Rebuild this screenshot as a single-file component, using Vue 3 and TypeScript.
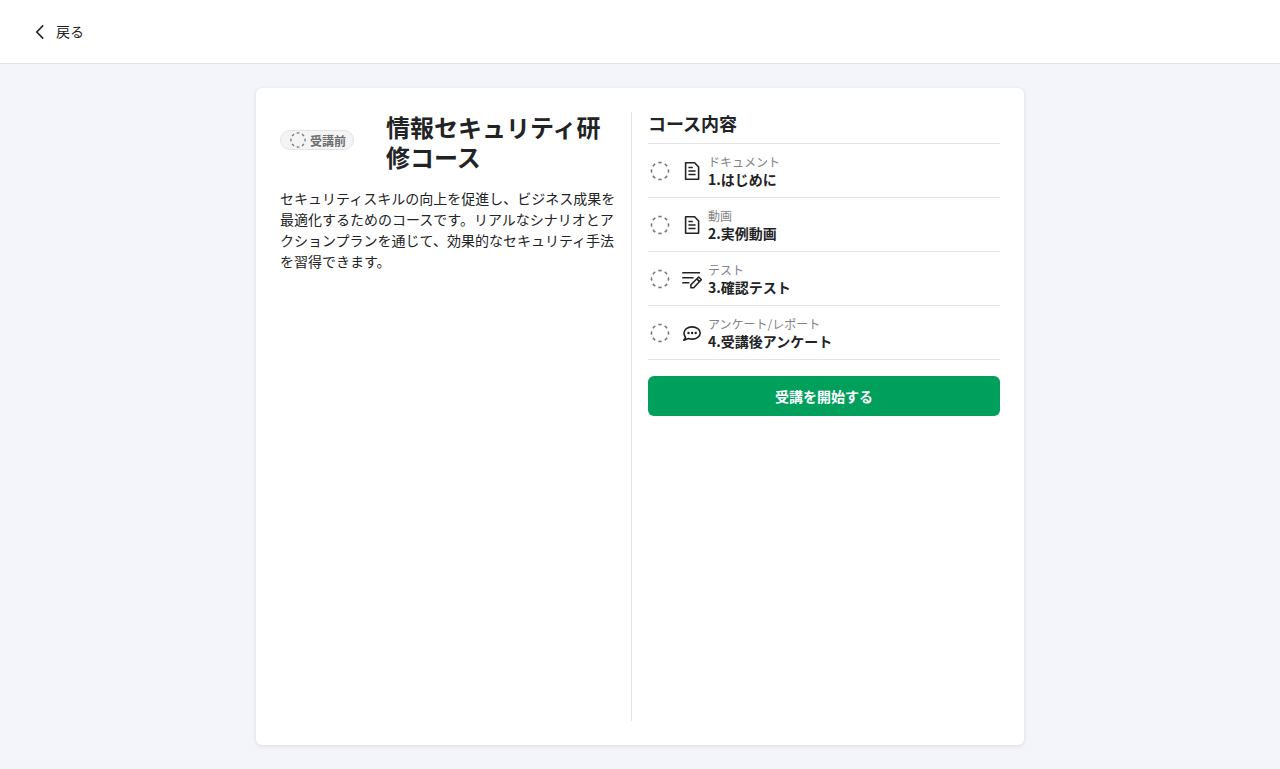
<script setup lang="ts">
type IconName = 'document' | 'test' | 'survey'

interface Lesson {
  kind: string
  title: string
  icon: IconName
}

const lessons: Lesson[] = [
  { kind: 'ドキュメント', title: '1.はじめに', icon: 'document' },
  { kind: '動画', title: '2.実例動画', icon: 'document' },
  { kind: 'テスト', title: '3.確認テスト', icon: 'test' },
  { kind: 'アンケート/レポート', title: '4.受講後アンケート', icon: 'survey' },
]
</script>

<template>
  <div class="page">
    <header class="topbar">
      <a class="back" href="#">
        <svg class="icon" viewBox="0 0 24 24" aria-hidden="true">
          <path d="M15.2 5.4 8.8 12l6.4 6.6" fill="none" stroke="currentColor" stroke-width="1.6" />
        </svg>
        戻る
      </a>
    </header>

    <main class="content">
      <article class="card">
        <section class="summary">
          <div class="heading">
            <div class="status">
              <span class="badge">
                <svg class="badge-icon" viewBox="0 0 24 24" aria-hidden="true">
                  <circle class="ring" cx="12" cy="12" r="8.5" pathLength="160" />
                </svg>
                <span class="badge-label">受講前</span>
              </span>
            </div>
            <h1 class="title">情報セキュリティ研修コース</h1>
          </div>
          <p class="description">セキュリティスキルの向上を促進し、ビジネス成果を最適化するためのコースです。リアルなシナリオとアクションプランを通じて、効果的なセキュリティ手法を習得できます。</p>
        </section>

        <section class="curriculum">
          <h2 class="subtitle">コース内容</h2>
          <ul class="lessons">
            <li v-for="lesson in lessons" :key="lesson.title" class="lesson">
              <svg class="icon progress" viewBox="0 0 24 24" aria-hidden="true">
                <circle class="ring" cx="12" cy="12" r="8.5" pathLength="160" />
              </svg>
              <svg class="icon" viewBox="0 0 24 24" fill="none" stroke="currentColor" stroke-width="1.6" aria-hidden="true">
                <template v-if="lesson.icon === 'document'">
                  <path d="M5.6 3.8h9l4 4.2v12.2h-13z" stroke-linejoin="round" />
                  <path d="M8.4 8.5h4.4M8.4 12h7.2M8.4 15.5h7.2" />
                </template>
                <template v-else-if="lesson.icon === 'test'">
                  <path d="M2.2 5.8h17.8M2.2 10.8h11.3M2.2 15.8h7.2" />
                  <path d="M10.9 20.8v-3l7.8-7.8 2.6 2.8-7.6 8zM16.8 11.8l2.6 2.8" stroke-linejoin="round" />
                </template>
                <template v-else>
                  <path d="M3.8 19.2 5.6 16.4C4.6 15.2 4 13.7 4 12c0-3.5 3.6-6.1 8.1-6.1s8.1 2.6 8.1 6.1-3.6 6.1-8.1 6.1c-1.3 0-2.6-.2-3.6-.6z" stroke-linejoin="round" />
                  <path d="M8.5 12h.01M12.1 12h.01M15.7 12h.01" stroke-width="2.4" stroke-linecap="round" />
                </template>
              </svg>
              <div class="lesson-text">
                <span class="kind">{{ lesson.kind }}</span>
                <span class="lesson-title">{{ lesson.title }}</span>
              </div>
            </li>
          </ul>
          <button class="start" type="button">受講を開始する</button>
        </section>
      </article>
    </main>
  </div>
</template>

<style>
body {
  margin: 0;
  background: #f4f5fa;
}
</style>

<style scoped>
.page {
  display: flex;
  flex-direction: column;
  min-height: 100vh;
  color: #222325;
  font-family: "Noto Sans CJK JP", sans-serif;
  font-size: 14px;
  line-height: 21px;
}

.topbar {
  display: flex;
  align-items: center;
  box-sizing: border-box;
  height: 64px;
  padding: 0 28px;
  background: #fff;
  border-bottom: 1px solid #e4e4e6;
}

.back {
  display: flex;
  align-items: center;
  gap: 4px;
  color: inherit;
  text-decoration: none;
}

.icon {
  display: block;
  flex: none;
  width: 24px;
  height: 24px;
}

.content {
  display: flex;
  flex: 1;
  justify-content: center;
  padding: 24px;
}

.card {
  display: grid;
  grid-template-columns: 1fr 1fr;
  gap: 16px;
  box-sizing: border-box;
  width: 100%;
  max-width: 768px;
  padding: 24px;
  background: #fff;
  border-radius: 6px;
  box-shadow: 0 1px 4px rgba(34, 35, 37, 0.12);
}

.summary {
  padding-right: 15px;
  border-right: 1px solid #e4e4e6;
}

.heading {
  display: flex;
  align-items: center;
  gap: 32px;
  margin-bottom: 16px;
}

.status {
  flex: none;
  padding-bottom: 4px;
}

.badge {
  display: flex;
  align-items: center;
  gap: 2px;
  box-sizing: border-box;
  height: 20px;
  padding: 0 7px;
  color: #6e6e70;
  background: #f4f4f4;
  border: 1px solid #e4e4e6;
  border-radius: 10px;
  font-size: 12px;
  font-weight: 700;
  line-height: 16px;
}

.badge-icon {
  width: 20px;
  height: 20px;
}

.badge-label {
  padding-top: 2px;
}

.ring {
  fill: none;
  stroke: #77787b;
  stroke-width: 1.6;
  stroke-dasharray: 10 10;
  stroke-dashoffset: 5;
}

.title {
  margin: 0;
  font-size: 24px;
  font-weight: 700;
  line-height: 30px;
}

.description {
  margin: 0;
}

.subtitle {
  margin: 0 0 8px;
  font-size: 18px;
  font-weight: 700;
  line-height: 23px;
}

.lessons {
  margin: 0 0 16px;
  padding: 0;
  border-top: 1px solid #e4e4e6;
  list-style: none;
}

.lesson {
  display: flex;
  align-items: center;
  padding: 9px 0 8px;
  border-bottom: 1px solid #e4e4e6;
}

.progress {
  margin-right: 8px;
}

.lesson-text {
  display: flex;
  flex-direction: column;
  margin-left: 4px;
  padding-bottom: 2px;
}

.kind {
  color: #828386;
  font-size: 12px;
  line-height: 18px;
}

.lesson-title {
  font-weight: 700;
  line-height: 16px;
}

.start {
  display: block;
  width: 100%;
  height: 40px;
  padding: 0 16px;
  color: #fff;
  background: #009f5c;
  border: 0;
  border-radius: 6px;
  font: inherit;
  font-weight: 700;
  cursor: pointer;
}
</style>
